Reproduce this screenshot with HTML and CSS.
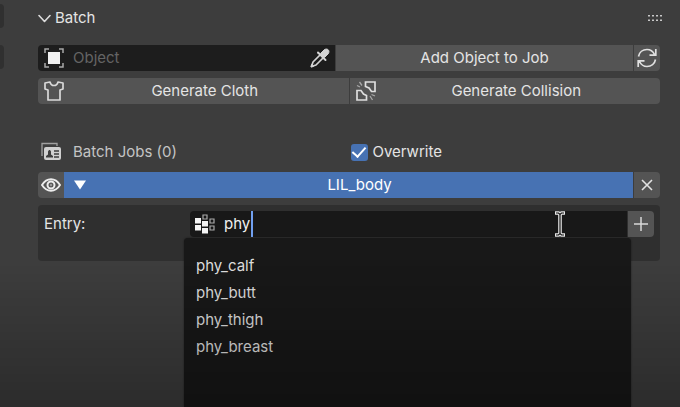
FILE: index.html
```html
<!DOCTYPE html>
<html lang="en">
<head>
    <meta charset="utf-8">
    <title>Batch</title>
    <link rel="stylesheet" href="styles.css">
</head>
<body>
    <div class="tabs">
        <span class="tab"></span>
        <span class="tab"></span>
    </div>

    <main class="panel">
        <header class="panel-header">
            <button class="toggle">
                <svg width="13" height="9" viewBox="0 0 13 9" fill="none" stroke="#dcdcdc" stroke-width="1.6" stroke-linecap="round" stroke-linejoin="round"><path d="M1 1.5L6.5 7.5L12 1.5"/></svg>
                Batch
            </button>
            <svg class="grip" width="14" height="7" viewBox="0 0 14 7" fill="#c8c8c8"><path d="M0 0h2v1.5H0zM4 0h2v1.5H4zM8 0h2v1.5H8zM12 0h2v1.5h-2zM0 4.500h2V6H0zM4 4.500h2V6H4zM8 4.500h2V6H8zM12 4.500h2V6h-2z"/></svg>
        </header>

        <div class="row object-row">
            <div class="object-field">
                <svg width="20" height="20" viewBox="0 0 20 20" fill="none" stroke="#a8a8a8" stroke-width="1.500"><path d="M1 5V1h4M15 1h4v4M19 15v4h-4M5 19H1v-4"/><path d="M4 4h12v12H4z" fill="#f0f0f0" stroke="none"/></svg>
                <input type="text" placeholder="Object" aria-label="Object">
                <button class="pick" aria-label="Eyedropper">
                    <svg width="20" height="20" viewBox="0 0 20 20" fill="none" stroke="#d4d4d4"><path d="M10.500 6.500L3 14l-1.500 4.500L6 17l7.500-7.500" stroke-width="1.700" stroke-linejoin="round"/><path d="M8 4.500l7.500 7.500" stroke-width="2" stroke-linecap="round"/><path d="M10.500 5.500L14 2c1.500-1.300 3.200-1.200 4.200-.2s1.100 2.700-.2 4.200l-3.500 3.500z" fill="#d4d4d4" stroke-width="1"/><path d="M1.500 16.500l2 2-2.500.5z" fill="#d4d4d4"/></svg>
                </button>
            </div>
            <button class="btn">Add Object to Job</button>
            <button class="btn square end" aria-label="Refresh">
                <svg width="20" height="20" viewBox="0 0 20 20" fill="none" stroke="#e0e0e0" stroke-width="1.700"><path d="M1.500 8.500C2.300 4.300 5.800 1.500 10 1.500c3.300 0 5.800 1.500 7.500 5M18.800 1v6.200h-6.300M18.500 11.500c-.8 4.200-4.300 7-8.500 7-3.300 0-5.800-1.500-7.500-5M1.200 19v-6.200h6.300"/></svg>
            </button>
        </div>

        <div class="row">
            <button class="btn wide start">
                <svg width="20" height="20" viewBox="0 0 20 20" fill="none" stroke="#dadada" stroke-width="1.700" stroke-linejoin="round"><path d="M1 2l5-1c.5 2.200 2 3.500 4 3.500S13.500 3.200 14 1l5 1v6l-3 1v10H4V9L1 8z"/></svg>
                <span>Generate Cloth</span>
            </button>
            <button class="btn wide end">
                <svg width="20" height="20" viewBox="0 0 20 20" fill="none" stroke="#dedede" stroke-width="1.700"><path d="M9.500 1H19v9.500h-3.500L13 7l-3.500-1.500zM1 9.500h4L7.500 13l3 1.500V19H1z"/><path d="M1 4.500l3 1.500M3.500 1l2.500 3.500M14 15l2.500 4M15.500 13.500L19 15" stroke="#a8a8a8" stroke-width="1.300"/></svg>
                <span>Generate Collision</span>
            </button>
        </div>

        <div class="jobs">
            <div class="jobs-title">
                <svg width="20" height="20" viewBox="0 0 20 20" fill="none"><path d="M1 14V1.500h15V4" stroke="#a0a0a0" stroke-width="1.300"/><rect x="3" y="5" width="17" height="13" rx="2" fill="#d0d0d0"/><path d="M5 15.500v-1.500l2-1.500V9.500l1-1.500h1l1 1.500v3l2 1.500v1.500z" fill="#3d3d3d"/><path d="M13 9h5M13 12h5M13 15h5" stroke="#3d3d3d" stroke-width="1.300"/></svg>
                Batch Jobs (0)
            </div>
            <label class="overwrite"><input type="checkbox" checked>Overwrite</label>
        </div>

        <div class="row job-row">
            <button class="btn square start" aria-label="Visibility">
                <svg width="20" height="14" viewBox="0 0 20 14" fill="none" stroke="#ededed"><path d="M1 7c2.300-3.700 5.400-5.700 9-5.700S16.700 3.300 19 7c-2.300 3.700-5.400 5.700-9 5.700S3.300 10.700 1 7z" stroke-width="1.900"/><circle cx="10" cy="7" r="3.500" stroke-width="2"/><circle cx="10" cy="7" r="1.200" fill="#999" stroke="none"/></svg>
            </button>
            <button class="job">
                <svg width="12" height="10" viewBox="0 0 12 10" fill="#fff"><path d="M0 .5h12L6 9.500z"/></svg>
                <span>LIL_body</span>
            </button>
            <button class="btn square end" aria-label="Remove">
                <svg width="12" height="12" viewBox="0 0 12 12" fill="none" stroke="#e2e2e2" stroke-width="1.600"><path d="M1 1l10 10M11 1L1 11"/></svg>
            </button>
        </div>

        <div class="box">
            <label for="entry">Entry:</label>
            <div class="entry">
                <svg width="20" height="20" viewBox="0 0 20 20"><path d="M0 4h6v5.500H0zM0 11h6v5.500H0zM7 7h6v5.500H7zM7 14h6v5.500H7z" fill="#f4f4f4"/><path d="M8 1h4v4H8zM15 5h4v4h-4zM15 12h4v4h-4z" fill="none" stroke="#aaa" stroke-width="1.200"/></svg>
                <input type="text" id="entry" value="phy" autocomplete="off">
                <span class="caret"></span>
                <svg class="pointer" width="10" height="26" viewBox="0 0 10 26" fill="none"><path d="M0 2h3.500L5 3.500 6.500 2H10M5 3v20M0 24h3.500L5 22.500 6.500 24H10" stroke="#e8e8e8" stroke-width="3.600"/><path d="M1 2h2.500L5 3.500 6.500 2H9M5 3v20M1 24h2.500L5 22.500 6.500 24H9" stroke="#111" stroke-width="1.200"/></svg>
                <ul class="results">
                    <li>phy_calf</li>
                    <li>phy_butt</li>
                    <li>phy_thigh</li>
                    <li>phy_breast</li>
                </ul>
            </div>
            <button class="btn square end" aria-label="Add entry">
                <svg width="14" height="14" viewBox="0 0 14 14" fill="none" stroke="#d8d8d8" stroke-width="1.500"><path d="M7 0v14M0 7h14"/></svg>
            </button>
        </div>
    </main>
</body>
</html>
```
FILE: styles.css
```css
* {
    box-sizing: border-box;
}
body {
    margin: 0;
    min-height: 100vh;
    display: flex;
    background: #3d3d3d;
    color: #e4e4e4;
    font-family: Inter, "Liberation Sans", sans-serif;
    font-size: 15px;
    line-height: 26px;
}
/* darkens the lower part of the window */
body::after {
    content: "";
    position: fixed;
    left: 0;
    right: 0;
    bottom: 0;
    height: 35vh;
    background: linear-gradient(transparent, rgba(0,0,0,0.28));
    pointer-events: none;
    z-index: 5;
}
button,
input {
    font: inherit;
    color: inherit;
    margin: 0;
    padding: 0;
    border: none;
    background: none;
}
svg {
    flex: none;
}
.tabs {
    width: 38px;
    padding-top: 4px;
}
.tab {
    display: block;
    width: 4px;
    height: 24px;
    margin-bottom: 17px;
    background: #303030;
    border-radius: 0 6px 6px 0;
}
.panel {
    flex: 1;
    padding: 5px 20px 0 0;
}
.panel-header {
    display: flex;
    justify-content: space-between;
    align-items: center;
    margin-bottom: 14px;
}
.toggle {
    display: flex;
    align-items: center;
    gap: 4px;
}
.grip {
    margin-right: -2px;
}
.row {
    display: flex;
    gap: 1px;
    margin-bottom: 7px;
}
.object-row {
    display: grid;
    grid-template-columns: minmax(0, 1fr) minmax(0, 1fr) 26px;
}
.object-field {
    display: flex;
    align-items: center;
    height: 26px;
    padding: 0 5px 0 6px;
    background: #1d1d1d;
    border-radius: 4px 0 0 4px;
}
.object-field input {
    flex: 1;
    min-width: 0;
    margin-left: 9px;
    outline: none;
}
.object-field input::placeholder {
    color: #646464;
    opacity: 1;
}
.pick {
    display: flex;
}
.btn {
    display: flex;
    align-items: center;
    justify-content: center;
    height: 26px;
    background: #545454;
}
.square {
    flex: none;
    width: 26px;
}
.start {
    border-radius: 4px 0 0 4px;
}
.end {
    border-radius: 0 4px 4px 0;
}
.wide {
    flex: 1;
    padding: 0 3px 0 6px;
}
.wide span,
.job span {
    flex: 1;
    text-align: center;
}
.jobs {
    display: flex;
    align-items: center;
    margin-top: 35px;
    margin-bottom: 7px;
}
.jobs-title,
.overwrite {
    flex: 1;
    display: flex;
    align-items: center;
}
.jobs-title {
    gap: 12px;
    padding-left: 3px;
    color: #c4c4c4;
}
.overwrite {
    gap: 5px;
}
.overwrite input {
    appearance: none;
    width: 17px;
    height: 17px;
    background: #4772b3;
    border-radius: 3px;
    display: grid;
    place-items: center;
}
.overwrite input:checked::before {
    content: "";
    width: 6px;
    height: 11px;
    margin-bottom: 3px;
    border: solid #fff;
    border-width: 0 2px 2px 0;
    transform: rotate(42deg);
}
.job-row {
    gap: 0;
}
.job {
    flex: 1;
    display: flex;
    align-items: center;
    margin-right: 1px;
    padding-left: 10px;
    background: #4772b3;
    color: #fff;
}
.box {
    display: flex;
    gap: 1px;
    padding: 6px 6px 24px;
    background: #2f2f2f;
    border-radius: 4px;
}
.box label {
    width: 145px;
}
.entry {
    position: relative;
    flex: 1;
    display: flex;
    align-items: center;
    height: 26px;
    padding-left: 5px;
    background: #181818;
    border-radius: 4px 0 0 4px;
}
.entry input {
    flex: 1;
    min-width: 0;
    margin-left: 9px;
    color: #f0f0f0;
    outline: none;
}
.caret {
    position: absolute;
    left: 61px;
    top: 0;
    width: 2px;
    height: 26px;
    background: #71a0f0;
}
.pointer {
    position: absolute;
    right: 62px;
    top: 0;
}
.results {
    position: absolute;
    top: 27px;
    left: -6px;
    right: -4px;
    min-height: calc(100vh - 238px);
    margin: 0;
    padding: 14px 12px;
    list-style: none;
    line-height: 27px;
    color: #dcdcdc;
    background: #181818;
    border-radius: 4px 4px 0 0;
    box-shadow: 0 0 2px rgba(0,0,0,0.5);
}
```
